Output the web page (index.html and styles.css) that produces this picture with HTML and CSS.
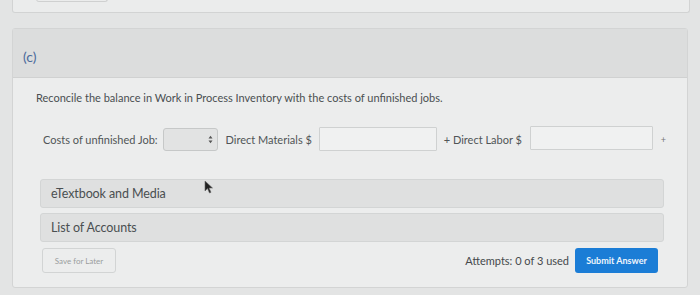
FILE: index.html
```html
<!DOCTYPE html>
<html>
<head>
<meta charset="utf-8">
<link rel="stylesheet" href="styles.css">
</head>
<body>
<div class="page">
  <div class="prev-card"><div class="prev-btn"></div></div>
  <div class="card">
    <div class="card-head"><span class="part">(c)</span></div>
    <div class="card-body">
      <p class="prompt">Reconcile the balance in Work in Process Inventory with the costs of unfinished jobs.</p>
      <div class="row">
        <span class="lbl">Costs of unfinished Job:</span>
        <span class="select"><svg width="5" height="9" viewBox="0 0 5 9"><path d="M0.5 3.5 L2.5 0.8 L4.5 3.5 Z M0.5 5.5 L2.5 8.2 L4.5 5.5 Z" fill="#555"/></svg></span>
        <span class="lbl">Direct Materials $</span>
        <span class="input in1"></span>
        <span class="lbl">+ Direct Labor $</span>
        <span class="input in2"></span>
        <span class="plus">+</span>
      </div>
      <div class="bar bar1">eTextbook and Media</div>
      <div class="bar bar2">List of Accounts</div>
      <div class="footer">
        <span class="save">Save for Later</span>
        <span class="attempts">Attempts: 0 of 3 used</span>
        <span class="submit">Submit Answer</span>
      </div>
    </div>
  </div>
  <svg class="cursor" width="10" height="14" viewBox="0 0 10 14"><path d="M1 1 L1 11 L3.5 8.5 L5.5 13 L7 12.3 L5 8 L8.5 8 Z" fill="#222" stroke="#666" stroke-width="0.6"/></svg>
</div>
</body>
</html>
```
FILE: styles.css
```css
html, body {
  margin: 0;
  padding: 0;
  background: #e3e4e4;
}
.page {
  position: relative;
  width: 700px;
  height: 295px;
  overflow: hidden;
  font-family: Lato, "Open Sans", sans-serif;
  color: #555a5c;
}
.prev-card {
  margin: -4px 10px 0 12px;
  height: 17px;
  box-sizing: border-box;
  border: 1px solid #d2d3d3;
  border-top: none;
  border-radius: 0 0 3px 3px;
  background: #ebecec;
  padding-left: 23px;
}
.prev-btn {
  width: 72px;
  height: 6px;
  box-sizing: border-box;
  border: 1px solid #cfd0d0;
  border-top: none;
  border-radius: 0 0 3px 3px;
}
.card {
  margin: 15px 12px 0 12px;
  height: 260px;
  box-sizing: border-box;
  border: 1px solid #d3d4d4;
  border-radius: 3px;
  background: #eceded;
}
.card-head {
  height: 48px;
  background: #dcdddd;
  border-bottom: 1px solid #d0d1d1;
  display: flex;
  align-items: center;
  padding-left: 10px;
}
.part {
  font-size: 14px;
  color: #4b6b9c;
  margin-top: 6px;
}
.card-body {
  padding: 13px 21px 0 23px;
}
.prompt {
  margin: 0;
  font-size: 11px;
  color: #4a4f51;
  line-height: 14px;
}
.row {
  display: flex;
  align-items: center;
  margin-top: 21px;
  padding-left: 7px;
  height: 26px;
  font-size: 11px;
}
.lbl {
  color: #505557;
  white-space: nowrap;
}
.select {
  width: 55px;
  height: 23px;
  box-sizing: border-box;
  margin: 0 8px 0 5px;
  border: 1px solid #c6c8c8;
  border-radius: 3px;
  background: #e2e3e3;
  display: flex;
  align-items: center;
  justify-content: flex-end;
  padding-right: 4px;
}
.input {
  height: 24px;
  box-sizing: border-box;
  border: 1px solid #cfd1d1;
  background: #f0f1f1;
  border-radius: 1px;
}
.in1 { width: 118px; margin: 0 7px 0 7px; }
.in2 { width: 123px; margin: -3px 8px 0 8px; }
.plus { font-size: 9px; color: #777; margin-left: 0; }
.bar {
  height: 29px;
  box-sizing: border-box;
  border: 1px solid #d3d5d5;
  border-radius: 3px;
  background: #dfe0e0;
  margin-left: 4px;
  width: 624px;
  display: flex;
  align-items: center;
  padding-left: 10px;
  font-size: 12.5px;
  letter-spacing: -0.1px;
  color: #4a4f51;
}
.bar1 { margin-top: 27px; }
.bar2 { margin-top: 5px; }
.footer {
  display: flex;
  align-items: center;
  margin-top: 6px;
  padding-left: 6px;
  width: 616px;
}
.save {
  width: 74px;
  height: 25px;
  box-sizing: border-box;
  border: 1px solid #d2d4d4;
  border-radius: 3px;
  font-size: 8px;
  color: #9a9d9e;
  display: flex;
  align-items: center;
  justify-content: center;
}
.attempts {
  margin-left: auto;
  font-size: 11px;
  color: #45494b;
  margin-right: 6px;
}
.submit {
  width: 83px;
  height: 25px;
  border-radius: 3px;
  background: #1b7dd6;
  color: #eef5fc;
  font-size: 9px;
  font-weight: bold;
  display: flex;
  align-items: center;
  justify-content: center;
}
.cursor {
  position: absolute;
  left: 204px;
  top: 180px;
}
```
